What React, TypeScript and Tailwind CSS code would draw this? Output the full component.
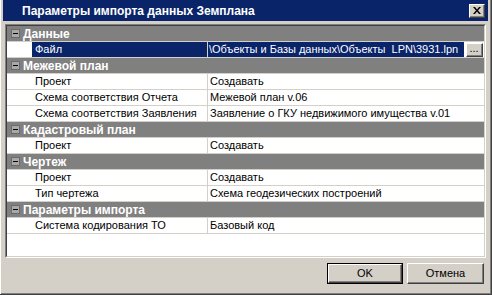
import React from 'react';

type Row =
  | { kind: 'group'; label: string }
  | { kind: 'prop'; name: string; value: string; selected?: boolean };

const rows: Row[] = [
  { kind: 'group', label: 'Данные' },
  { kind: 'prop', name: 'Файл', value: '\\Объекты и Базы данных\\Объекты  LPN\\3931.lpn', selected: true },
  { kind: 'group', label: 'Межевой план' },
  { kind: 'prop', name: 'Проект', value: 'Создавать' },
  { kind: 'prop', name: 'Схема соответствия Отчета', value: 'Межевой план v.06' },
  { kind: 'prop', name: 'Схема соответствия Заявления', value: 'Заявление о ГКУ недвижимого имущества v.01' },
  { kind: 'group', label: 'Кадастровый план' },
  { kind: 'prop', name: 'Проект', value: 'Создавать' },
  { kind: 'group', label: 'Чертеж' },
  { kind: 'prop', name: 'Проект', value: 'Создавать' },
  { kind: 'prop', name: 'Тип чертежа', value: 'Схема геодезических построений' },
  { kind: 'group', label: 'Параметры импорта' },
  { kind: 'prop', name: 'Система кодирования ТО', value: 'Базовый код' },
];

// raised 3d bevel used for classic buttons
const raised =
  'border border-t-white border-l-white border-r-[#404040] border-b-[#404040] shadow-[inset_-1px_-1px_0_#808080]';

function MinusBox() {
  return (
    <div className="w-[9px] h-[9px] border border-[#6a6a6a] bg-[#a8a8a8] flex items-center justify-center shrink-0">
      <div className="w-[5px] h-[1px] bg-black" />
    </div>
  );
}

function GroupRow({ label }: { label: string }) {
  return (
    <div className="h-[16px] bg-[#808080] border-b border-[#d4d0c8] flex items-center pl-[4px]">
      <MinusBox />
      <span className="ml-[3px] text-white font-bold text-[12px] leading-none whitespace-nowrap">{label}</span>
    </div>
  );
}

function PropRow({ name, value, selected }: { name: string; value: string; selected?: boolean }) {
  return (
    <div className="h-[16px] grid grid-cols-[25px_176px_1fr] border-b border-[#d4d0c8] text-[11px] leading-none">
      <div className="bg-white" />
      <div
        className={
          'flex items-center pl-[3px] border-r border-[#d4d0c8] whitespace-nowrap overflow-hidden ' +
          (selected ? 'bg-[#0a246a] text-white' : 'bg-white text-black')
        }
      >
        {name}
      </div>
      {selected ? (
        <div className="flex items-center bg-white min-w-0">
          <div className="flex-1 min-w-0 h-full bg-[#0a246a] text-white flex items-center pl-[1px] whitespace-pre overflow-hidden">
            {value}
          </div>
          <div className="w-[20px] h-full flex items-center justify-center bg-white shrink-0">
            <div className={'w-[17px] h-[14px] bg-[#d4d0c8] flex items-end justify-center pb-[2px] text-[11px] ' + raised}>
              ...
            </div>
          </div>
        </div>
      ) : (
        <div className="flex items-center pl-[2px] bg-white text-black whitespace-nowrap overflow-hidden min-w-0">{value}</div>
      )}
    </div>
  );
}

export default function App() {
  return (
    <div
      className="w-[492px] h-[295px] bg-[#d4d0c8] flex flex-col pl-[3px] pr-[4px] pb-[3px] shadow-[inset_-1px_-1px_0_#404040,inset_1px_0_0_#ffffff,inset_-2px_-2px_0_#808080]"
      style={{ fontFamily: '"Liberation Sans", Arial, sans-serif' }}
    >
      {/* Title bar */}
      <div className="h-[21px] bg-[#0a246a] flex items-center pl-[19px] pr-[3px] shrink-0">
        <span className="text-white font-bold text-[12px] flex-1">Параметры импорта данных Земплана</span>
        <div className={'w-[16px] h-[14px] bg-[#d4d0c8] flex items-center justify-center ' + raised}>
          <svg width="8" height="7" viewBox="0 0 8 7">
            <path d="M0 0h2l2 2.5L6 0h2L5 3.5 8 7H6L4 4.5 2 7H0l3-3.5z" fill="black" />
          </svg>
        </div>
      </div>

      {/* Body */}
      <div className="flex-1 flex flex-col px-[2px] pt-[3px]">
        <div className="h-[234px] border border-t-[#808080] border-l-[#808080] border-r-white border-b-white">
          <div className="h-full border border-t-[#404040] border-l-[#404040] border-r-[#d4d0c8] border-b-[#d4d0c8] bg-white overflow-hidden">
            {rows.map((r, i) =>
              r.kind === 'group' ? (
                <GroupRow key={i} label={r.label} />
              ) : (
                <PropRow key={i} name={r.name} value={r.value} selected={r.selected} />
              )
            )}
          </div>
        </div>

        {/* Buttons */}
        <div className="flex justify-end gap-[4px] pt-[5px] pr-[2px] text-[11px]">
          <div className="w-[76px] h-[21px] border border-black">
            <div className={'w-full h-full bg-[#d4d0c8] flex items-center justify-center ' + raised}>OK</div>
          </div>
          <div className={'w-[77px] h-[21px] bg-[#d4d0c8] flex items-center justify-center ' + raised}>Отмена</div>
        </div>
      </div>
    </div>
  );
}
